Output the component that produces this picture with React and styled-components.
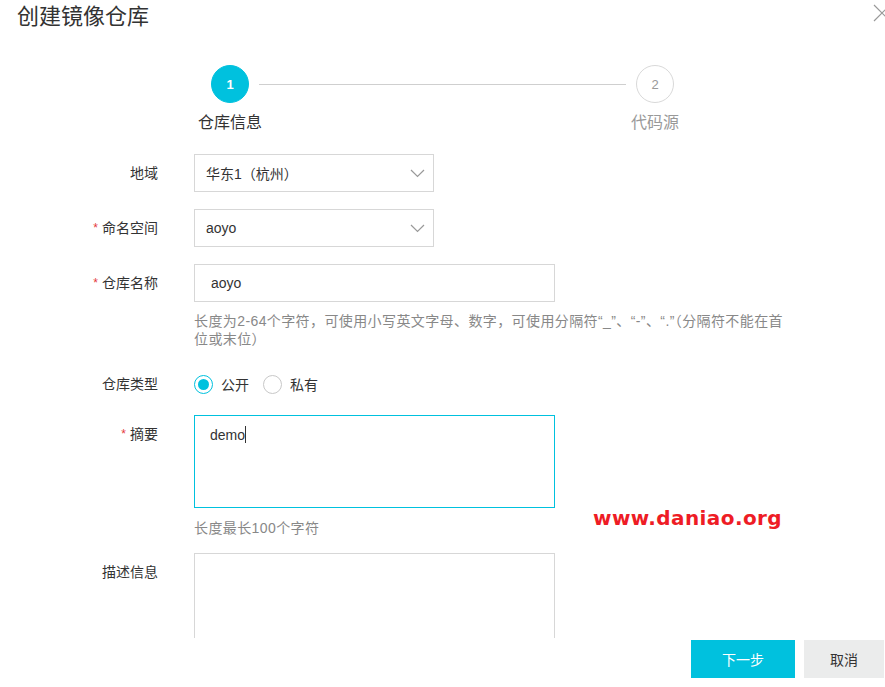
import React from "react"
import styled, { createGlobalStyle } from "styled-components"

const GlobalStyle = createGlobalStyle`
  html, body { margin: 0; padding: 0; background: #fff; }
  body {
    font-family: "Liberation Sans", "Noto Sans CJK SC", Arial, sans-serif;
    color: #333;
  }
  * { box-sizing: border-box; }
`

const Page = styled.div`
  position: relative;
  width: 885px;
  height: 687px;
  display: flex;
  flex-direction: column;
  overflow: hidden;
`

const Header = styled.div`
  height: 36px;
  display: flex;
  align-items: flex-start;
  justify-content: space-between;
  padding: 3px 0 0 17px;
`

const Title = styled.h1`
  margin: 0;
  font-size: 22px;
  font-weight: 400;
  line-height: 28px;
  color: #333;
`

const CloseButton = styled.button`
  border: none;
  background: none;
  padding: 0;
  margin: 1px -6px 0 0;
  width: 18px;
  height: 18px;
  cursor: pointer;
`

const Body = styled.div`
  flex: 1;
  overflow: hidden;
`

const Steps = styled.div`
  display: flex;
  align-items: flex-start;
  margin: 29px 0 0 211px;
  width: 463px;
`

const Step = styled.div`
  width: 38px;
  display: flex;
  flex-direction: column;
  align-items: center;
`

const Circle = styled.div`
  width: 38px;
  height: 38px;
  border-radius: 50%;
  display: flex;
  align-items: center;
  justify-content: center;
  font-size: 13px;
  font-weight: ${p => (p.active ? 700 : 400)};
  color: ${p => (p.active ? "#fff" : "#999")};
  background: ${p => (p.active ? "#00c1de" : "#fff")};
  border: 1px solid ${p => (p.active ? "#00c1de" : "#d9d9d9")};
`

const StepLabel = styled.div`
  margin-top: 10px;
  white-space: nowrap;
  font-size: 16px;
  line-height: 20px;
  color: ${p => (p.active ? "#333" : "#999")};
`

const Connector = styled.div`
  flex: 1;
  height: 1px;
  background: #cfcfcf;
  margin: 19px 10px 0;
`

const Form = styled.div`
  margin-top: 21px;
`

const Item = styled.div`
  display: grid;
  grid-template-columns: 158px 1fr;
  column-gap: 36px;
  margin-bottom: ${p => p.gap || 17}px;
`

const Label = styled.label`
  text-align: right;
  font-size: 14px;
  line-height: 38px;
  color: #333;
  white-space: nowrap;
`

const Req = styled.span`
  color: #e4393c;
  font-size: 12px;
  margin-right: 4px;
  vertical-align: 1px;
`

const Field = styled.div`
  display: flex;
  flex-direction: column;
`

const SelectBox = styled.div`
  width: 240px;
  height: 38px;
  border: 1px solid #d7d7d7;
  display: flex;
  align-items: center;
  justify-content: space-between;
  padding: 0 8px 0 11px;
  font-size: 14px;
  color: #333;
`

const TextInput = styled.div`
  width: 361px;
  height: 38px;
  border: 1px solid #d7d7d7;
  display: flex;
  align-items: center;
  padding-left: 16px;
  font-size: 14px;
  color: #333;
`

const TextArea = styled.div`
  width: 361px;
  height: ${p => p.h}px;
  border: 1px solid ${p => (p.focus ? "#00c1de" : "#d7d7d7")};
  padding: 9px 15px;
  font-size: 14px;
  line-height: 20px;
  color: #333;
`

const Caret = styled.span`
  display: inline-block;
  width: 1px;
  height: 17px;
  background: #333;
  vertical-align: -3px;
`

const Hint = styled.div`
  margin-top: ${p => p.top || 10}px;
  width: 594px;
  font-size: 14px;
  line-height: 18px;
  letter-spacing: 0.4px;
  color: #888;
`

const RadioGroup = styled.div`
  display: flex;
  align-items: center;
  height: 38px;
`

const RadioOption = styled.span`
  display: flex;
  align-items: center;
  margin-right: 14px;
  font-size: 14px;
  color: #333;
`

const RadioDot = styled.span`
  width: 19px;
  height: 19px;
  border-radius: 50%;
  border: 1px solid ${p => (p.checked ? "#00c1de" : "#c8c8c8")};
  display: flex;
  align-items: center;
  justify-content: center;
  margin-right: 8px;
  &::after {
    content: "";
    width: 11px;
    height: 11px;
    border-radius: 50%;
    background: ${p => (p.checked ? "#00c1de" : "transparent")};
  }
`

const Footer = styled.div`
  height: 49px;
  display: flex;
  justify-content: flex-end;
  align-items: flex-start;
  gap: 9px;
  padding: 2px 1px 0 0;
`

const Button = styled.button`
  height: 38px;
  width: ${p => p.w}px;
  border: none;
  font-family: inherit;
  font-size: 14px;
  background: ${p => (p.primary ? "#00c1de" : "#ebecec")};
  color: ${p => (p.primary ? "#fff" : "#333")};
  cursor: pointer;
`

const Watermark = styled.div`
  position: absolute;
  left: 593px;
  top: 506px;
  font-family: "DejaVu Sans", Verdana, sans-serif;
  font-weight: 700;
  font-size: 20px;
  letter-spacing: 0.4px;
  color: #ee1c25;
`

function Chevron() {
  return (
    <svg width="15" height="9" viewBox="0 0 15 9">
      <path d="M1 1l6.5 6.5L14 1" fill="none" stroke="#999" strokeWidth="1.2" />
    </svg>
  )
}

function CloseIcon() {
  return (
    <svg width="18" height="18" viewBox="0 0 18 18">
      <path d="M1 1l16 16M17 1L1 17" stroke="#999" strokeWidth="1.2" />
    </svg>
  )
}

export default function App() {
  return (
    <Page>
      <GlobalStyle />
      <Header>
        <Title>创建镜像仓库</Title>
        <CloseButton aria-label="close"><CloseIcon /></CloseButton>
      </Header>
      <Body>
        <Steps>
          <Step>
            <Circle active>1</Circle>
            <StepLabel active>仓库信息</StepLabel>
          </Step>
          <Connector />
          <Step>
            <Circle>2</Circle>
            <StepLabel>代码源</StepLabel>
          </Step>
        </Steps>
        <Form>
          <Item>
            <Label>地域</Label>
            <SelectBox>华东1（杭州）<Chevron /></SelectBox>
          </Item>
          <Item>
            <Label><Req>*</Req>命名空间</Label>
            <SelectBox>aoyo<Chevron /></SelectBox>
          </Item>
          <Item>
            <Label><Req>*</Req>仓库名称</Label>
            <Field>
              <TextInput>aoyo</TextInput>
              <Hint>长度为2-64个字符，可使用小写英文字母、数字，可使用分隔符“_”、“-”、“.”（分隔符不能在首位或末位）</Hint>
            </Field>
          </Item>
          <Item gap={12}>
            <Label>仓库类型</Label>
            <RadioGroup>
              <RadioOption><RadioDot checked />公开</RadioOption>
              <RadioOption><RadioDot />私有</RadioOption>
            </RadioGroup>
          </Item>
          <Item gap={16}>
            <Label><Req>*</Req>摘要</Label>
            <Field>
              <TextArea focus h={93}>demo<Caret /></TextArea>
              <Hint top={11}>长度最长100个字符</Hint>
            </Field>
          </Item>
          <Item>
            <Label>描述信息</Label>
            <TextArea h={120} />
          </Item>
        </Form>
      </Body>
      <Footer>
        <Button primary w={104}>下一步</Button>
        <Button w={80}>取消</Button>
      </Footer>
      <Watermark>www.daniao.org</Watermark>
    </Page>
  )
}
